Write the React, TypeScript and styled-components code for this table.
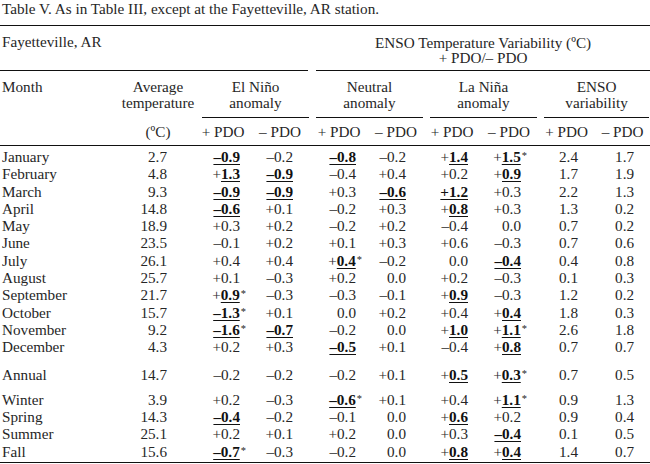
import React from "react";
import styled, { createGlobalStyle } from "styled-components";

const GlobalStyle = createGlobalStyle`
  html, body {
    margin: 0;
    padding: 0;
    background: #fff;
  }
  body {
    font-family: "Liberation Serif", "Times New Roman", serif;
    font-size: 15.2px;
    color: #262626;
  }
`;

// column widths and the right padding that lines the numbers up
const COLS = [
  { w: 110, pad: 0 },
  { w: 86, pad: 29 },
  { w: 54, pad: 10 },
  { w: 60, pad: 17 },
  { w: 58, pad: 12 },
  { w: 56, pad: 18 },
  { w: 56, pad: 12 },
  { w: 58, pad: 17 },
  { w: 57, pad: 17 },
  { w: 55, pad: 16 },
];

type Row = { month: string; cells: string[]; top?: number; bottom?: number };

// b = bold/underlined number, B = sign included, * = significance mark
const ROWS: Row[] = [
  { month: "January", cells: ["2.7", "b-0.9", "-0.2", "b-0.8", "-0.2", "b+1.4", "b+1.5*", "2.4", "1.7"], top: 2 },
  { month: "February", cells: ["4.8", "b+1.3", "b-0.9", "-0.4", "+0.4", "+0.2", "b+0.9", "1.7", "1.9"] },
  { month: "March", cells: ["9.3", "b-0.9", "b-0.9", "+0.3", "b-0.6", "B+1.2", "+0.3", "2.2", "1.3"] },
  { month: "April", cells: ["14.8", "b-0.6", "+0.1", "-0.2", "+0.3", "b+0.8", "+0.3", "1.3", "0.2"] },
  { month: "May", cells: ["18.9", "+0.3", "+0.2", "-0.2", "+0.2", "-0.4", "0.0", "0.7", "0.2"] },
  { month: "June", cells: ["23.5", "-0.1", "+0.2", "+0.1", "+0.3", "+0.6", "-0.3", "0.7", "0.6"] },
  { month: "July", cells: ["26.1", "+0.4", "+0.4", "b+0.4*", "-0.2", "0.0", "b-0.4", "0.4", "0.8"] },
  { month: "August", cells: ["25.7", "+0.1", "-0.3", "+0.2", "0.0", "+0.2", "-0.3", "0.1", "0.3"] },
  { month: "September", cells: ["21.7", "b+0.9*", "-0.3", "-0.3", "-0.1", "b+0.9", "-0.3", "1.2", "0.2"] },
  { month: "October", cells: ["15.7", "b-1.3*", "+0.1", "0.0", "+0.2", "+0.4", "b+0.4", "1.8", "0.3"] },
  { month: "November", cells: ["9.2", "b-1.6*", "b-0.7", "-0.2", "0.0", "b+1.0", "b+1.1*", "2.6", "1.8"] },
  { month: "December", cells: ["4.3", "+0.2", "+0.3", "b-0.5", "+0.1", "-0.4", "b+0.8", "0.7", "0.7"] },
  { month: "Annual", cells: ["14.7", "-0.2", "-0.2", "-0.2", "+0.1", "b+0.5", "b+0.3*", "0.7", "0.5"], top: 10.2 },
  { month: "Winter", cells: ["3.9", "+0.2", "-0.3", "b-0.6*", "+0.1", "+0.4", "b+1.1*", "0.9", "1.3"], top: 7.7 },
  { month: "Spring", cells: ["14.3", "b-0.4", "-0.2", "-0.1", "0.0", "b+0.6", "+0.2", "0.9", "0.4"] },
  { month: "Summer", cells: ["25.1", "+0.2", "+0.1", "+0.2", "0.0", "+0.3", "b-0.4", "0.1", "0.5"] },
  { month: "Fall", cells: ["15.6", "b-0.7*", "-0.3", "-0.2", "0.0", "b+0.8", "b+0.4", "1.4", "0.7"], bottom: 2.3 },
];

const GROUPS = [
  ["El Niño", "anomaly"],
  ["Neutral", "anomaly"],
  ["La Niña", "anomaly"],
  ["ENSO", "variability"],
];

const Page = styled.div`
  width: 650px;
`;

const Caption = styled.div`
  padding-left: 2px;
  line-height: 17px;
  margin-bottom: 8px;
  white-space: nowrap;
`;

const Table = styled.table`
  width: 650px;
  table-layout: fixed;
  border-collapse: separate;
  border-spacing: 0;
  border-top: 1px solid #111;
  border-bottom: 1px solid #111;
`;

const HeadCell = styled.th<{
  $align?: "left" | "center";
  $padL?: number;
  $padR?: number;
  $top?: number;
  $bottom?: number;
  $rule?: boolean;
}>`
  font-weight: normal;
  vertical-align: top;
  white-space: nowrap;
  text-align: ${(p) => p.$align ?? "center"};
  padding: ${(p) => p.$top ?? 0}px ${(p) => p.$padR ?? 0}px
    ${(p) => p.$bottom ?? 0}px ${(p) => p.$padL ?? 0}px;
  line-height: 16px;
  border-bottom: ${(p) => (p.$rule ? "1px solid #111" : "none")};
`;

const Ruled = styled.div<{ $top: number; $bottom: number; $lh: number }>`
  padding: ${(p) => p.$top}px 0 ${(p) => p.$bottom}px;
  line-height: ${(p) => p.$lh}px;
  border-bottom: 1px solid #111;
`;

const Cell = styled.td<{ $left?: boolean; $pad: number; $top?: number; $bottom?: number }>`
  white-space: nowrap;
  line-height: 17.3px;
  text-align: ${(p) => (p.$left ? "left" : "right")};
  padding: ${(p) => p.$top ?? 0}px ${(p) => (p.$left ? 0 : p.$pad)}px
    ${(p) => p.$bottom ?? 0}px ${(p) => (p.$left ? 2 : 0)}px;
`;

const Strong = styled.span`
  font-weight: bold;
  color: #111;
  text-decoration: underline;
  text-decoration-thickness: 1px;
  text-underline-offset: 2px;
`;

const Star = styled.span`
  font-size: 10.5px;
  vertical-align: 3px;
  line-height: 0;
  margin-right: -6px;
  padding-left: 1px;
`;

const Value: React.FC<{ text: string }> = ({ text }) => {
  let s = text;
  const star = s.endsWith("*");
  if (star) s = s.slice(0, -1);
  let mode = "";
  if (s[0] === "b" || s[0] === "B") {
    mode = s[0];
    s = s.slice(1);
  }
  s = s.replace("-", "–");
  let body: React.ReactNode = s;
  if (mode === "B" || (mode === "b" && s[0] === "–")) {
    body = <Strong>{s}</Strong>;
  } else if (mode === "b") {
    body = (
      <>
        {s[0]}
        <Strong>{s.slice(1)}</Strong>
      </>
    );
  }
  return (
    <>
      {body}
      {star && <Star>*</Star>}
    </>
  );
};

export default function App() {
  return (
    <Page>
      <GlobalStyle />
      <Caption>Table V. As in Table III, except at the Fayetteville, AR station.</Caption>
      <Table>
        <colgroup>
          {COLS.map((c, i) => (
            <col key={i} style={{ width: c.w }} />
          ))}
        </colgroup>
        <thead>
          <tr>
            <HeadCell colSpan={4} $align="left" $padR={2}>
              <Ruled $top={8} $bottom={5} $lh={15.5}>
                <span style={{ paddingLeft: 2 }}>Fayetteville, AR</span>
                <br />
                &nbsp;
              </Ruled>
            </HeadCell>
            <HeadCell colSpan={6} $padL={6}>
              <Ruled $top={8.5} $bottom={4.5} $lh={15.5}>
                ENSO Temperature Variability (ºC)
                <br />+ PDO/– PDO
              </Ruled>
            </HeadCell>
          </tr>
          <tr>
            <HeadCell rowSpan={2} $align="left" $padL={2} $top={8} $rule>
              Month
            </HeadCell>
            <HeadCell $padL={10} $top={8}>
              Average
              <br />
              temperature
            </HeadCell>
            {GROUPS.map(([a, b]) => (
              <HeadCell key={a} colSpan={2} $padL={6} $padR={1}>
                <Ruled $top={8} $bottom={6} $lh={16}>
                  {a}
                  <br />
                  {b}
                </Ruled>
              </HeadCell>
            ))}
          </tr>
          <tr>
            <HeadCell $padL={10} $top={6} $bottom={5} $rule>
              (ºC)
            </HeadCell>
            {GROUPS.map(([a]) => (
              <React.Fragment key={a}>
                <HeadCell $top={6} $bottom={5} $rule>
                  + PDO
                </HeadCell>
                <HeadCell $top={6} $bottom={5} $rule>
                  – PDO
                </HeadCell>
              </React.Fragment>
            ))}
          </tr>
        </thead>
        <tbody>
          {ROWS.map((r) => (
            <tr key={r.month}>
              <Cell $left $pad={0} $top={r.top} $bottom={r.bottom}>
                {r.month}
              </Cell>
              {r.cells.map((c, i) => (
                <Cell key={i} $pad={COLS[i + 1].pad} $top={r.top} $bottom={r.bottom}>
                  <Value text={c} />
                </Cell>
              ))}
            </tr>
          ))}
        </tbody>
      </Table>
    </Page>
  );
}
